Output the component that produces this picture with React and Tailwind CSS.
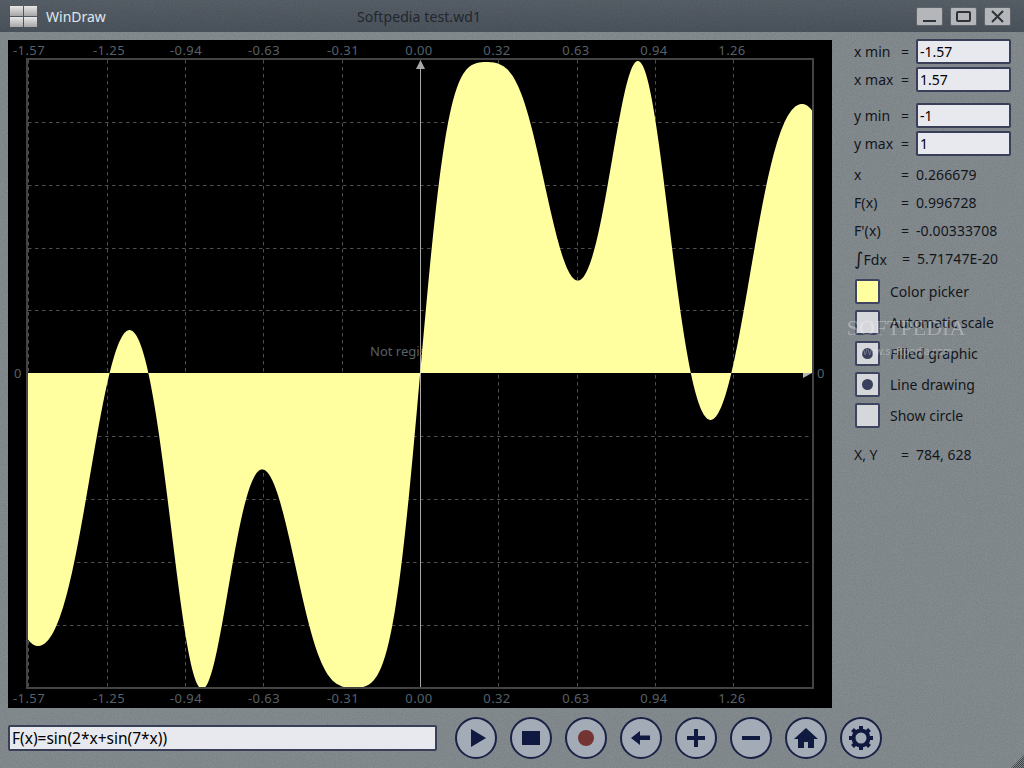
import React from "react";

const TICKS = ["-1.57", "-1.25", "-0.94", "-0.63", "-0.31", "0.00", "0.32", "0.63", "0.94", "1.26"];
const GRID_X = [28, 107, 185, 263, 342, 420, 498, 577, 655, 733, 812];
const GRID_Y = [122, 185, 248, 310, 436, 499, 562, 625];
const LABEL_X = [29, 109, 186, 264, 343, 419, 497, 576, 654, 732];

const RANGES = [
  [{ label: "x min", value: "-1.57" }, { label: "x max", value: "1.57" }],
  [{ label: "y min", value: "-1" }, { label: "y max", value: "1" }],
];
const READOUT = [
  { label: "x", value: "0.266679" },
  { label: "F(x)", value: "0.996728" },
  { label: "F'(x)", value: "-0.00333708" },
];
const OPTIONS = [
  { label: "Color picker", swatch: true },
  { label: "Automatic scale" },
  { label: "Filled graphic", on: true },
  { label: "Line drawing", on: true },
  { label: "Show circle" },
];

function curve() {
  let d = "M28 373";
  for (let px = 28; px <= 812; px += 1) {
    const x = ((px - 420) / 392) * 1.57;
    const y = 375 - Math.sin(2 * x + Math.sin(7 * x)) * 314;
    d += `L${px} ${y.toFixed(1)}`;
  }
  return d + "L812 373Z";
}

const Grain = ({ id }) => (
  <svg className="pointer-events-none absolute inset-0 -z-10 h-full w-full">
    <filter id={id}>
      <feTurbulence type="fractalNoise" baseFrequency="0.9" numOctaves="2" />
      <feColorMatrix values="0 0 0 0 0  0 0 0 0 0  0 0 0 0 0  0 0 0 0.5 -0.12" />
    </filter>
    <rect width="100%" height="100%" filter={`url(#${id})`} opacity="0.35" />
  </svg>
);

const Graph = () => (
  <div className="h-[668px] w-[824px] shrink-0 bg-black">
    <svg width="824" height="668" viewBox="8 40 824 668" className="block">
      <g stroke="#4e4e4e" strokeDasharray="3.500 3.500" strokeWidth="1">
        {GRID_X.map((x) => <line key={x} x1={x + 0.5} y1="60" x2={x + 0.5} y2="688" />)}
        {GRID_Y.map((y) => <line key={y} x1="28" y1={y + 0.5} x2="812" y2={y + 0.5} />)}
      </g>
      <line x1="420.5" y1="66" x2="420.5" y2="688" stroke="#a8a8a8" />
      <path d="M420.500 60L425 69H416Z" fill="#a8a8a8" />
      <path d="M812 373L803 373V378Z" fill="#b4b4b4" />
      <g fill="#56606a" fontSize="13" letterSpacing="0.4" textAnchor="middle">
        {TICKS.map((t, i) => <text key={t} x={LABEL_X[i]} y="55">{t}</text>)}
        {TICKS.map((t, i) => <text key={t} x={LABEL_X[i]} y="703">{t}</text>)}
        <text x="18" y="378">0</text>
        <text x="821" y="378">0</text>
      </g>
      <text x="370" y="356" fill="#56606a" fontSize="13">Not registered</text>
      <path d={curve()} fill="#ffffa0" />
      <rect x="27" y="59" width="786" height="629" fill="none" stroke="#444444" strokeWidth="2" />
    </svg>
  </div>
);

const RangeField = ({ label, value }) => (
  <div className="flex h-[25px] items-center">
    <span className="w-[47px]">{label}</span>
    <span className="w-[15px]">=</span>
    <input readOnly value={value} className="h-[25px] w-[95px] rounded-[2px] border-2 border-[#3a3f58] bg-[#e8e9ee] pl-[2px] text-black outline-none" />
  </div>
);

const Option = ({ label, swatch, on }) => (
  <div className="flex h-[25px] items-center">
    <span className={`flex h-[25px] w-[25px] items-center justify-center rounded-[2px] border-2 border-[#3f4560] ${swatch ? "bg-[#ffffa0]" : "bg-[#d6d7db]"}`}>
      {on && <span className="h-[11px] w-[11px] rounded-full bg-[#3a3f5c]" />}
    </span>
    <span className="ml-[10px]">{label}</span>
  </div>
);

const SidePanel = () => (
  <aside className="relative ml-[22px] w-[170px] text-[14px] leading-none text-[#12161b]">
    {RANGES.map((group, i) => (
      <div key={i} className={`flex flex-col gap-[3px] ${i ? "mt-[11px]" : "-mt-[1px]"}`}>
        {group.map((r) => <RangeField key={r.label} {...r} />)}
      </div>
    ))}
    <div className="mt-[5px] flex flex-col">
      {READOUT.map((r) => (
        <div key={r.label} className="flex h-[28px] items-center tracking-[0.1px]">
          <span className="w-[47px]">{r.label}</span>
          <span className="w-[15px]">=</span>
          <span>{r.value}</span>
        </div>
      ))}
      <div className="flex h-[28px] items-center tracking-[0.1px]">
        <span className="w-[48px]"><span className="font-['DejaVu_Sans',sans-serif] text-[18px]">∫</span>Fdx</span>
        <span className="w-[15px]">=</span>
        <span>5.71747E-20</span>
      </div>
    </div>
    <div className="mt-[6px] ml-[1px] flex flex-col gap-[6px]">
      {OPTIONS.map((o) => <Option key={o.label} {...o} />)}
    </div>
    <div className="mt-[19px] flex h-[16px] items-center">
      <span className="w-[47px]">X, Y</span>
      <span className="w-[15px]">=</span>
      <span>784, 628</span>
    </div>
    <div className="pointer-events-none absolute top-[277px] left-[-9px] w-[122px] text-center leading-none text-white opacity-30">
      <div className="font-['Liberation_Serif',serif] text-[22px]">SOFTPEDIA</div>
      <div className="mt-[7px] text-[10px]">www.softpedia.com</div>
    </div>
  </aside>
);

const WinButton = ({ children }) => (
  <button className="flex h-[19px] w-[27px] items-center justify-center rounded-[2px] border border-[#5f656b] bg-[#b4b6b9]">
    <svg width="17" height="13" viewBox="0 0 17 13" fill="none" stroke="#2e333a" strokeWidth="2">{children}</svg>
  </button>
);

const ToolButton = ({ children }) => (
  <button className="flex h-[42px] w-[42px] items-center justify-center rounded-full border-2 border-[#1a2246] bg-[#a3abb6]">
    <svg width="26" height="26" viewBox="0 0 26 26" fill="#10193f">{children}</svg>
  </button>
);

const GEAR_TEETH = [0, 45, 90, 135];

const Toolbar = () => (
  <div className="ml-[18px] flex gap-[13px]">
    <ToolButton><path d="M8 4L23 13L8 22Z" /></ToolButton>
    <ToolButton><rect x="4" y="6" width="18" height="14" /></ToolButton>
    <ToolButton><circle cx="13" cy="13" r="8" fill="#743432" /></ToolButton>
    <ToolButton><path d="M3 13L12 6V10.500H22V15H12V20Z" /></ToolButton>
    <ToolButton><path d="M11 4H15V11H22V15H15V22H11V15H4V11H11Z" /></ToolButton>
    <ToolButton><rect x="4" y="11" width="18" height="4" /></ToolButton>
    <ToolButton><path d="M13 3L25 14H21V23H15V17H11V23H5V14H1Z" /></ToolButton>
    <ToolButton>
      <circle cx="13" cy="13" r="7.500" fill="none" stroke="#10193f" strokeWidth="4" />
      {GEAR_TEETH.map((a) => <rect key={a} x="11" y="1" width="4" height="24" transform={`rotate(${a} 13 13)`} />)}
      <circle cx="13" cy="13" r="5.500" fill="#a3abb6" />
    </ToolButton>
  </div>
);

const App = () => (
  <div className="relative isolate flex h-[768px] w-[1024px] flex-col overflow-hidden bg-[#878e92] font-['Noto_Sans',sans-serif]">
    <Grain id="grain-body" />
    <header className="relative isolate flex h-[32px] shrink-0 items-center bg-gradient-to-b from-[#59616a] to-[#4c545d] text-[14px]">
      <Grain id="grain-head" />
      <div className="ml-[10px] grid h-[21px] w-[27px] grid-cols-2 grid-rows-2 gap-[1px]">
        <span className="bg-gradient-to-b from-[#e8e8e8] to-[#a6a6a6]" />
        <span className="bg-gradient-to-b from-[#e8e8e8] to-[#a6a6a6]" />
        <span className="bg-gradient-to-b from-[#e8e8e8] to-[#a6a6a6]" />
        <span className="bg-gradient-to-b from-[#e8e8e8] to-[#a6a6a6]" />
      </div>
      <span className="ml-[9px] w-[311px] text-[#dfe7ef]">WinDraw</span>
      <span className="w-[559px] tracking-[0.1px] text-[#22272d]">Softpedia test.wd1</span>
      <div className="flex gap-[7px]">
        <WinButton><path d="M2 11H15" /></WinButton>
        <WinButton><rect x="2" y="2" width="13" height="9" rx="1" /></WinButton>
        <WinButton><path d="M3 1L14 12M14 1L3 12" /></WinButton>
      </div>
    </header>
    <main className="flex pt-[8px] pl-[8px]">
      <Graph />
      <SidePanel />
    </main>
    <footer className="mt-[9px] flex items-center pl-[8px]">
      <input readOnly value="F(x)=sin(2*x+sin(7*x))" className="h-[26px] w-[429px] rounded-[2px] border-2 border-[#3a3f58] bg-[#e8e9ee] pl-[2px] text-[15.5px] text-black outline-none" />
      <Toolbar />
    </footer>
    <svg width="13" height="13" viewBox="0 0 13 13" className="absolute right-0 bottom-0">
      <defs>
        <pattern id="grip" width="2" height="2" patternUnits="userSpaceOnUse">
          <rect width="1" height="1" fill="#3c4148" />
          <rect x="1" y="1" width="1" height="1" fill="#3c4148" />
        </pattern>
      </defs>
      <path d="M13 0V13H0Z" fill="url(#grip)" />
    </svg>
  </div>
);

export default App;
